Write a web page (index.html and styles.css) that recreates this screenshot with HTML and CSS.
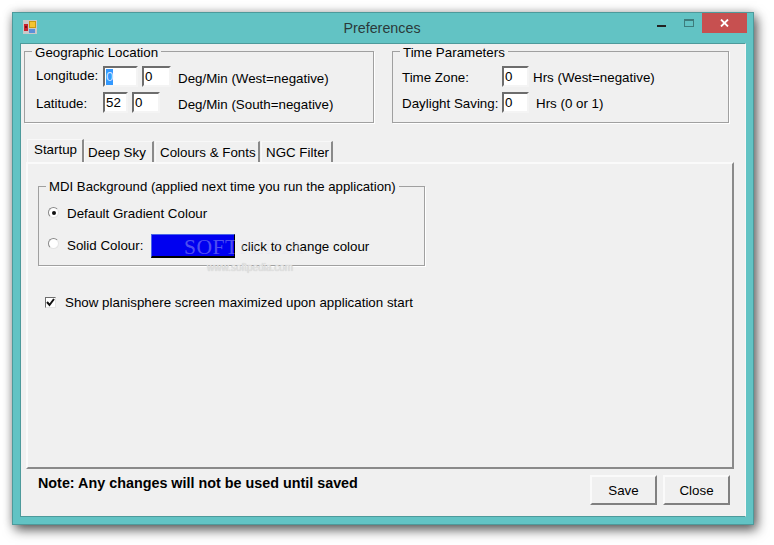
FILE: index.html
```html
<!DOCTYPE html>
<html lang="en">
<head>
<meta charset="utf-8">
<title>Preferences</title>
<link rel="stylesheet" href="styles.css">
</head>
<body>
<div class="window">
  <header class="titlebar">
    <svg class="app-icon" width="14" height="14" viewBox="0 0 14 14">
      <rect x="0" y="0" width="14" height="14" fill="#c9c9c9"/>
      <rect x="1" y="4" width="4" height="7" fill="#c8232c"/>
      <rect x="2" y="6" width="2" height="2" fill="#7a1116"/>
      <rect x="6.5" y="1.5" width="6" height="6" fill="#f4c430" stroke="#c89a10" stroke-width="1"/>
      <rect x="6" y="9" width="6" height="4" fill="#5b8fd8"/>
    </svg>
    <h1 class="title">Preferences</h1>
    <div class="controls">
      <div class="ctl ctl-min"><svg width="9" height="3" viewBox="0 0 9 3"><rect width="9" height="2" y="0" fill="#222"/></svg></div>
      <div class="ctl ctl-max"><svg width="10" height="8" viewBox="0 0 10 8"><rect x="0.5" y="0.5" width="9" height="7" fill="none" stroke="#3d7c7c"/><rect x="0" y="0" width="10" height="2" fill="#3d7c7c"/></svg></div>
      <div class="ctl ctl-close"><svg width="9" height="8" viewBox="0 0 9 8"><path d="M1 0.5 L8 7.5 M8 0.5 L1 7.5" stroke="#fff" stroke-width="1.8" fill="none"/></svg></div>
    </div>
  </header>
  <main class="client">
    <div class="top-groups">
      <section class="group group-geo">
        <div class="legend">Geographic Location</div>
        <div class="row row-1">
          <span class="lbl lbl-geo lbl-up">Longitude:</span>
          <div class="field w35"><span class="sel">0</span></div>
          <div class="field w29">0</div>
          <span class="hint hint-geo">Deg/Min (West=negative)</span>
        </div>
        <div class="row row-2">
          <span class="lbl lbl-geo">Latitude:</span>
          <div class="field w25">52</div>
          <div class="field w28">0</div>
          <span class="hint hint-geo2">Deg/Min (South=negative)</span>
        </div>
      </section>
      <section class="group group-time">
        <div class="legend">Time Parameters</div>
        <div class="row row-1">
          <span class="lbl lbl-time">Time Zone:</span>
          <div class="field w27">0</div>
          <span class="hint hint-t1">Hrs (West=negative)</span>
        </div>
        <div class="row row-2">
          <span class="lbl lbl-time">Daylight Saving:</span>
          <div class="field w27">0</div>
          <span class="hint hint-t2">Hrs (0 or 1)</span>
        </div>
      </section>
    </div>
    <nav class="tabs">
      <div class="tab tab-active">Startup</div>
      <div class="tab tab-2">Deep Sky</div>
      <div class="tab tab-3">Colours &amp; Fonts</div>
      <div class="tab tab-4">NGC Filter</div>
    </nav>
    <section class="panel">
      <div class="group group-mdi">
        <div class="legend legend-mdi">MDI Background (applied next time you run the application)</div>
        <div class="opt opt-1">
          <span class="radio radio-on"></span>
          <span>Default Gradient Colour</span>
        </div>
        <div class="opt opt-2">
          <span class="radio"></span>
          <span class="solid-label">Solid Colour:</span>
          <div class="swatch"></div>
          <span class="change">click to change colour</span>
        </div>
      </div>
      <div class="check-row">
        <span class="check"><svg width="9" height="9" viewBox="0 0 9 9"><path d="M1 4 L3.5 7 L8 1" fill="none" stroke="#111" stroke-width="2"/></svg></span>
        <span>Show planisphere screen maximized upon application start</span>
      </div>
    </section>
    <footer class="footer">
      <p class="note">Note: Any changes will not be used until saved</p>
      <div class="buttons">
        <div class="btn">Save</div>
        <div class="btn">Close</div>
      </div>
    </footer>
    <div class="wm wm-logo">SOFTPEDIA<sup class="wm-tm">™</sup></div>
    <div class="wm wm-url">www.softpedia.com</div>
  </main>
</div>
</body>
</html>
```
FILE: styles.css
```css
* { box-sizing: border-box; }
html, body { margin: 0; padding: 0; }
body {
  width: 774px;
  height: 545px;
  background: #fff;
  overflow: hidden;
  font-family: "Liberation Sans", Arial, sans-serif;
  font-size: 13.35px;
  color: #000;
  position: relative;
}
.window {
  position: absolute;
  left: 12px;
  top: 12px;
  width: 742px;
  height: 513px;
  background: #62c3c4;
  border: 1px solid #4d9a9b;
  box-shadow: 3px 5px 11px rgba(0,0,0,.62), 0 0 9px rgba(0,0,0,.18);
  display: flex;
  flex-direction: column;
  padding: 0 7px 7px;
}
.titlebar {
  height: 30px;
  flex: none;
  display: flex;
  position: relative;
  align-items: flex-start;
}
.app-icon { margin: 7px 0 0 3px; flex: none; }
.title {
  position: absolute;
  left: 0;
  right: 2px;
  top: 6px;
  margin: 0;
  text-align: center;
  font-weight: normal;
  font-size: 14.3px;
  line-height: 18px;
  color: #2b3a3a;
}
.controls {
  position: absolute;
  right: -1px;
  top: 0;
  display: flex;
}
.ctl { display: flex; align-items: center; justify-content: center; height: 20px; }
.ctl-min { width: 27px; padding: 7px 0 0 0; }
.ctl-max { width: 27px; }
.ctl-close { width: 45px; background: #c75050; }

.client {
  flex: 1;
  background: #f0f0f0;
  border: 1px solid #4d9a9b;
  border-color: #4d9a9b #f7f7f7 #4d9a9b #4d9a9b;
  position: relative;
  display: flex;
  flex-direction: column;
  padding: 7px 0 0 3px;
}
.top-groups { display: flex; gap: 18px; height: 72px; flex: none; }
.group {
  border: 1px solid #a0a0a0;
  box-shadow: 1px 1px 0 #fff;
  position: relative;
}
.group-geo { width: 350px; padding: 14px 0 0 11px; }
.group-time { width: 337px; padding: 14px 0 0 9px; }
.legend {
  position: absolute;
  top: -6px;
  left: 7px;
  padding: 0 3px;
  background: #f0f0f0;
  line-height: 14px;
  white-space: nowrap;
}
.legend-mdi { top: -7px; font-size: 13.2px; }
.row { display: flex; align-items: center; }
.row-1 { height: 21px; }
.row-2 { height: 21px; margin-top: 5px; }
.lbl { flex: none; padding-top: 2px; }
.lbl-geo { width: 67px; }
.lbl.lbl-up { padding-top: 0; padding-bottom: 2px; }
.lbl-time { width: 100px; }
.field {
  height: 21px;
  background: #fff;
  border: 2px solid;
  border-color: #6d6d6d #f4f4f4 #f4f4f4 #6d6d6d;
  line-height: 17px;
  padding-left: 1px;
  margin-right: 4px;
  flex: none;
}
.w35 { width: 35px; }
.w29 { width: 29px; }
.w25 { width: 25px; }
.w28 { width: 28px; }
.w27 { width: 27px; }
.sel { background: #3399ff; color: #cfe6ff; display: inline-block; line-height: 16px; }
.hint { padding-top: 2px; }
.hint-geo { margin-left: 3px; padding-top: 4px; }
.hint-geo2 { margin-left: 14px; padding-top: 4px; }
.hint-t1 { margin-left: 0; }
.hint-t2 { margin-left: 3px; }

.tabs {
  display: flex;
  align-items: flex-end;
  height: 39px;
  flex: none;
  margin-left: 3px;
}
.tab {
  height: 21px;
  line-height: 21px;
  border: 1px solid #f8f8f8;
  border-right: 2px solid #8a8a8a;
  border-bottom: none;
  white-space: nowrap;
  margin-right: 1px;
  flex: none;
}
.tab-active { width: 57px; height: 23px; line-height: 20px; margin-right: 0; padding-left: 6px; }
.tab-2 { width: 70px; padding-left: 3px; }
.tab-3 { width: 105px; padding-left: 4px; }
.tab-4 { width: 72px; padding-left: 4px; }
.panel {
  width: 708px;
  height: 307px;
  margin-left: 2px;
  flex: none;
  border: 2px solid;
  border-color: #fafafa #8a8a8a #8a8a8a #fafafa;
  padding: 22px 0 0 10px;
}
.group-mdi { width: 387px; height: 80px; padding: 0 0 0 9px; }
.opt { display: flex; align-items: center; }
.opt-1 { height: 20px; margin-top: 16px; }
.opt-2 { height: 26px; margin-top: 7px; }
.radio {
  width: 11px;
  height: 11px;
  border-radius: 50%;
  background: #fff;
  border: 1px solid #888;
  border-right-color: #e4e4e4;
  border-bottom-color: #e4e4e4;
  margin-right: 8px;
  position: relative;
  flex: none;
}
.opt-1 .radio { margin-bottom: 2px; }
.radio-on::after {
  content: "";
  position: absolute;
  left: 3px;
  top: 3px;
  width: 4px;
  height: 4px;
  border-radius: 50%;
  background: #111;
}
.solid-label { width: 84px; flex: none; padding-top: 4px; }
.swatch {
  width: 84px;
  height: 24px;
  background: #0000f0;
  border: 1px solid;
  border-color: #4a66e8 #000 #000 #4a66e8;
  border-bottom-width: 2px;
  margin-top: 6px;
  flex: none;
}
.change { margin-left: 6px; padding-top: 6px; }
.check-row { display: flex; align-items: center; margin: 27px 0 0 7px; height: 18px; }
.check {
  width: 11px;
  height: 11px;
  background: #fff;
  border: 1px solid #6d6d6d;
  border-right-color: #e4e4e4;
  border-bottom-color: #e4e4e4;
  margin-right: 9px;
  display: flex;
  flex: none;
}
.footer { display: flex; justify-content: space-between; flex: 1; }
.note { margin: 6px 0 0 14px; font-weight: bold; font-size: 14.35px; line-height: 16px; }
.buttons { display: flex; gap: 6px; margin: 6px 15px 0 0; }
.btn {
  width: 67px;
  height: 30px;
  background: #f0f0f0;
  border: 2px solid;
  border-color: #fafafa #808080 #808080 #fafafa;
  text-align: center;
  line-height: 27px;
}
.wm { position: absolute; white-space: nowrap; pointer-events: none; }
.wm-logo { left: 163px; top: 188px; font-family: "Liberation Serif", serif; font-size: 21.5px; line-height: 24px; letter-spacing: .5px; color: rgba(225,225,240,.36); }
.wm-tm { font-size: 7px; }
.wm-url { left: 186px; top: 217px; font-size: 10px; line-height: 14px; color: #e3e3e3; text-shadow: 0 0 1px #bbb; }
```
